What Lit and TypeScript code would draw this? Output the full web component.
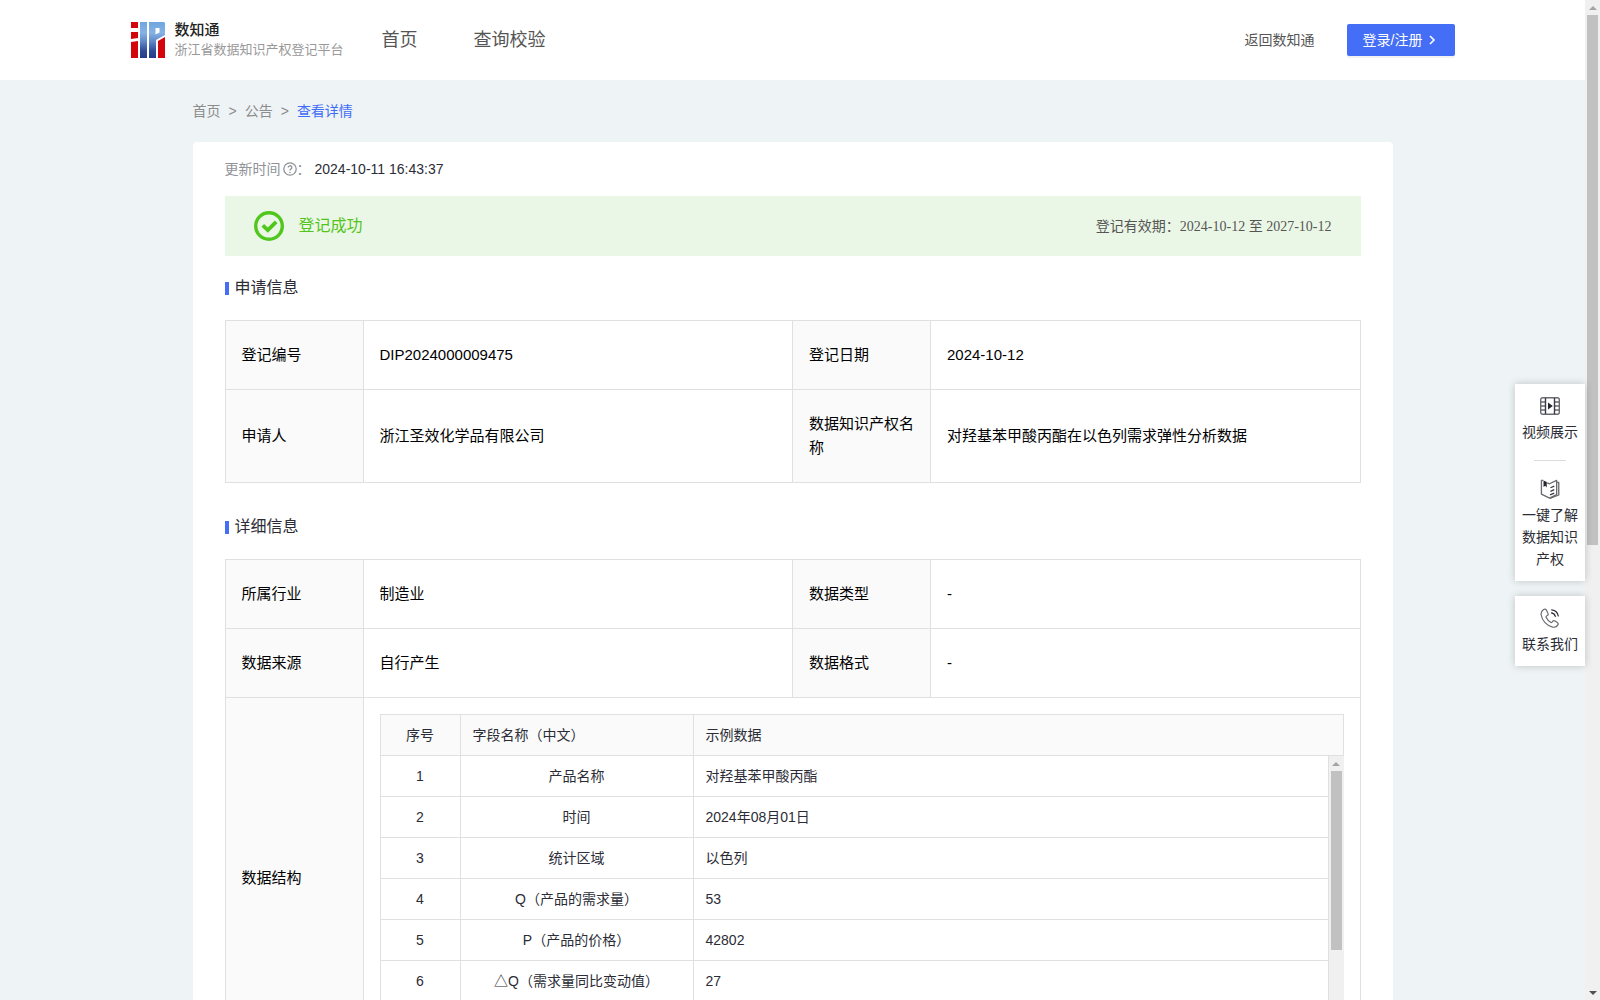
import { LitElement, html, css, svg } from "lit";
import { customElement, property } from "lit/decorators.js";

const FONT = css`"Liberation Sans", "Noto Sans CJK SC", sans-serif`;

const FIELDS: [number, string, string][] = [
  [1, "产品名称", "对羟基苯甲酸丙酯"],
  [2, "时间", "2024年08月01日"],
  [3, "统计区域", "以色列"],
  [4, "Q（产品的需求量）", "53"],
  [5, "P（产品的价格）", "42802"],
  [6, "△Q（需求量同比变动值）", "27"],
];

const logo = svg`<svg class="logo" viewBox="0 0 34 36" width="34" height="36" aria-hidden="true">
  <defs><linearGradient id="blue" gradientUnits="userSpaceOnUse" x1="0" y1="0" x2="0" y2="36">
    <stop offset="0" stop-color="#6ea6de"/><stop offset=".3" stop-color="#86b2e4"/><stop offset=".55" stop-color="#5f86c6"/><stop offset=".8" stop-color="#2f4c98"/><stop offset="1" stop-color="#243c88"/>
  </linearGradient></defs>
  <path fill="#d3040c" d="M0 0h7v6H0zM0 10h7v6l-7 1zM0 20l7-1v17H0zM27 19l7-4v21h-7z"/>
  <path fill="url(#blue)" d="M9 0h7v36H9zM18 0h15l1 1v12l-9 5v18h-7z"/>
  <path fill="#fff" d="M24.5 6h4v4.500l-4 2z"/>
</svg>`;

const helpIcon = svg`<svg viewBox="0 0 14 14" width="14" height="14" fill="none" stroke="#8f9298" aria-hidden="true">
  <circle cx="7" cy="7" r="6.2" stroke-width="1.3"/>
  <path d="M5.2 5.6a1.8 1.8 0 1 1 2.6 1.6c-.6.3-.8.5-.8 1.2" stroke-width="1.3"/><circle cx="7" cy="10.3" r=".4"/>
</svg>`;

const okIcon = svg`<svg viewBox="0 0 30 30" width="30" height="30" fill="none" stroke="#4fc71d" aria-hidden="true">
  <circle cx="15" cy="15" r="13.3" stroke-width="3.4"/><path d="M8.8 14.4l5 4.800 8.400-8.400" stroke-width="3.8"/>
</svg>`;

const videoIcon = svg`<svg viewBox="0 0 20 18" width="20" height="18" fill="none" stroke="#6a6b70" stroke-width="1.4" aria-hidden="true">
  <rect x=".7" y=".7" width="18.6" height="16.6" rx="2"/><path d="M.7 5H5M.7 9H5M.7 13H5M15 5h4.3M15 9h4.3M15 13h4.3"/>
  <path d="M5.5 1v16M14.5 1v16" stroke="#3a3b44"/>
  <path d="M8 5.6L12.8 9 8 12.4z" fill="#26272e" stroke="none"/>
</svg>`;

const bookIcon = svg`<svg viewBox="0 0 20 21" width="20" height="21" fill="none" stroke="#6a6b70" stroke-width="1.4" stroke-linejoin="round" aria-hidden="true">
  <path d="M3 1.5H1v14.3L9.5 20l7.5-3.6V1.5L9.5 5 7 4"/><path d="M17 3.5h2.2v13.3L10 20.3"/>
  <path d="M3.2 1.5v6.8l1.7-1.3 1.7 2V3.2z" fill="#26272e" stroke="none"/><path d="M10.5 9.2l4-1.8M10.5 13l4-1.8M10 16.6l4.5-1.8" stroke="#3a3b44"/>
</svg>`;

const phoneIcon = svg`<svg viewBox="0 0 20 20" width="20" height="20" fill="none" stroke="#6a6b70" stroke-width="1.2" stroke-linecap="round" stroke-linejoin="round" aria-hidden="true">
  <path d="M3.6 1.5C1.6 2.800.8 4.800 1.200 7c.8 5.400 5.600 11 11.400 12.100 2.200.4 4.200-.2 5.300-2.200.6-1.100.3-1.900-.6-2.500l-2.300-1.500c-.9-.6-1.800-.4-2.400.4l-.6.8c-.4.5-.9.5-1.400.2C8.800 13.200 7.200 11.500 6.200 9.500c-.3-.6-.2-1 .3-1.400l.9-.6c.8-.6 1-1.400.5-2.300L6.500 2.200C5.800 1 4.800.8 3.600 1.500z"/>
  <path d="M11.5 4.8c2 .3 3.400 1.600 3.800 3.600M11.700 1.800c3.400.4 6 2.800 6.600 6.200" stroke="#26272e"/>
</svg>`;

@customElement("scroll-rail")
class ScrollRail extends LitElement {
  @property({ type: Number }) thumb = 50;
  static styles = css`
    :host { display: flex; flex-direction: column; flex: none; width: 15px; background: #f0f0f0; }
    .cap { flex: none; display: flex; align-items: center; justify-content: center; height: 15px; }
    .track { flex: 1; padding: 0 2px; min-height: 0; }
    .thumb { background: #c1c1c1; }
  `;
  render() {
    return html`
      <div class="cap"><svg viewBox="0 0 8 4" width="8" height="4"><path d="M0 4l4-4 4 4z" fill="#a3a3a3"/></svg></div>
      <div class="track"><div class="thumb" style="height:${this.thumb}%"></div></div>
      <div class="cap"><svg viewBox="0 0 8 4" width="8" height="4"><path d="M0 0h8L4 4z" fill="#505050"/></svg></div>`;
  }
}

@customElement("site-header")
class SiteHeader extends LitElement {
  static styles = css`
    :host { display: block; background: #fff; font-family: ${FONT}; }
    .bar { display: flex; align-items: center; height: 80px; max-width: 1324px; margin: 0 auto; }
    a { color: #555; text-decoration: none; }
    .brand { display: flex; align-items: center; gap: 10px; }
    .logo { flex: none; }
    .names { display: flex; flex-direction: column; white-space: nowrap; }
    .name { font-size: 15px; line-height: 20px; font-weight: 500; color: #222; }
    .sub { font-size: 13px; line-height: 20px; color: #999; }
    nav { display: flex; gap: 56px; margin-left: 38px; font-size: 18px; }
    .right { display: flex; align-items: center; gap: 32px; margin-left: auto; font-size: 14px; }
    button { display: flex; align-items: center; gap: 4px; height: 32px; padding: 0 16px; border: 0; border-radius: 2px; background: #446ef5; color: #fff; font: 14px/30px ${FONT}; box-shadow: 0 2px 0 rgba(0, 0, 0, 0.05); }
  `;
  render() {
    return html`<header class="bar">
      <a class="brand" href="#">${logo}<span class="names"><span class="name">数知通</span><span class="sub">浙江省数据知识产权登记平台</span></span></a>
      <nav><a href="#">首页</a><a href="#">查询校验</a></nav>
      <div class="right"><a href="#">返回数知通</a>
        <button type="button">登录/注册<svg viewBox="0 0 12 12" width="12" height="12" fill="none" stroke="#fff" stroke-width="1.6" aria-hidden="true"><path d="M3 2l4 4-4 4"/></svg></button>
      </div>
    </header>`;
  }
}

@customElement("field-table")
class FieldTable extends LitElement {
  static styles = css`
    :host { display: block; font: 14px/22px ${FONT}; color: #2b2c36; }
    table { width: 100%; border-collapse: separate; border-spacing: 0; table-layout: fixed; }
    .frame { border: 1px solid #e0e0e0; border-bottom: 0; border-right: 0; }
    .head { border-right: 1px solid #e0e0e0; }
    .body { display: flex; height: 286px; }
    .rows { flex: 1; min-width: 0; }
    .no { width: 80px; }
    .field { width: 233px; }
    th, td { box-sizing: border-box; height: 41px; padding: 0 12px; border-right: 1px solid #e0e0e0; border-bottom: 1px solid #e0e0e0; text-align: left; font-weight: 400; }
    th { background: #fafafa; }
    .head th:last-child { border-right: 0; }
    .mid { text-align: center; }
  `;
  render() {
    return html`<div class="frame">
      <div class="head"><table>
        <colgroup><col class="no" /><col class="field" /><col /></colgroup>
        <thead><tr><th class="mid">序号</th><th>字段名称（中文）</th><th>示例数据</th></tr></thead>
      </table></div>
      <div class="body">
        <div class="rows"><table>
          <colgroup><col class="no" /><col class="field" /><col /></colgroup>
          <tbody>${FIELDS.map(([n, name, value]) => html`<tr><td class="mid">${n}</td><td class="mid">${name}</td><td>${value}</td></tr>`)}</tbody>
        </table></div>
        <scroll-rail .thumb=${70}></scroll-rail>
      </div>
    </div>`;
  }
}

@customElement("side-dock")
class SideDock extends LitElement {
  static styles = css`
    :host { display: flex; flex-direction: column; gap: 15px; width: 70px; font: 14px/22px ${FONT}; }
    .box { background: #fff; box-shadow: 0 0 8px rgba(0, 0, 0, 0.2); padding: 0 6px; }
    a { display: flex; flex-direction: column; align-items: center; gap: 5px; padding: 12px 0 11px; color: #2b2c36; text-decoration: none; text-align: center; }
    .label { width: 58px; }
    .rule { width: 32px; height: 1px; margin: 6px auto; background: #ddd; }
    svg { height: 20px; }
  `;
  render() {
    return html`
      <div class="box">
        <a href="#">${videoIcon}<span class="label">视频展示</span></a>
        <div class="rule"></div>
        <a href="#">${bookIcon}<span class="label">一键了解数据知识产权</span></a>
      </div>
      <div class="box"><a href="#">${phoneIcon}<span class="label">联系我们</span></a></div>`;
  }
}

@customElement("app-root")
class AppRoot extends LitElement {
  static styles = css`
    :host { display: flex; position: relative; height: 100vh; background: #eef3f6; font: 14px/22px ${FONT}; color: #2b2c36; }
    .page { flex: 1; min-width: 0; overflow-y: auto; scrollbar-width: none; }
    main { box-sizing: border-box; max-width: 1200px; margin: 0 auto; }
    .crumbs { display: flex; gap: 8px; padding: 20px 0; color: #8c8c8c; }
    .crumbs a { color: inherit; text-decoration: none; }
    .crumbs a.here { color: #3f6df5; }
    .card { background: #fff; border-radius: 4px; padding: 16px 32px 32px; }
    .updated { display: flex; align-items: center; }
    .updated .key { display: flex; align-items: center; color: #8f9298; }
    .updated svg { margin-left: 2px; }
    .updated .val { margin-left: 4px; }
    .banner { display: flex; align-items: center; gap: 15px; height: 60px; margin-top: 16px; padding: 0 29px; background: #ebf7e6; }
    .banner .state { font-size: 16px; color: #52c41a; }
    .banner .term { margin-left: auto; color: #555; }
    .banner .dates { font-family: "Liberation Serif", "Noto Sans CJK SC", serif; }
    h2 { display: flex; align-items: center; gap: 6px; margin: 0; padding: 19px 0; font-size: 16px; line-height: 26px; font-weight: 400; }
    h2::before { content: ""; width: 4px; height: 13px; background: #446ef5; }
    .info { width: 100%; border-collapse: collapse; table-layout: fixed; font-size: 15px; line-height: 24px; color: #000; margin-bottom: 12px; }
    .info col.key { width: 138px; }
    .info th, .info td { padding: 22px 16px; border: 1px solid #e0e0e0; text-align: left; font-weight: 400; }
    .info th { background: #fafafa; }
    .info td.nest { padding: 16px; }
    side-dock { position: absolute; right: 15px; top: 384px; }
  `;
  render() {
    const cols = html`<colgroup><col class="key" /><col /><col class="key" /><col /></colgroup>`;
    return html`
      <div class="page">
        <site-header></site-header>
        <main>
          <nav class="crumbs"><a href="#">首页</a><span>&gt;</span><a href="#">公告</a><span>&gt;</span><a class="here" href="#">查看详情</a></nav>
          <div class="card">
            <div class="updated"><span class="key">更新时间${helpIcon}：</span><span class="val">2024-10-11 16:43:37</span></div>
            <div class="banner">${okIcon}<span class="state">登记成功</span><span class="term">登记有效期：<span class="dates">2024-10-12 至 2027-10-12</span></span></div>
            <h2>申请信息</h2>
            <table class="info">${cols}<tbody>
              <tr><th>登记编号</th><td>DIP2024000009475</td><th>登记日期</th><td>2024-10-12</td></tr>
              <tr><th>申请人</th><td>浙江圣效化学品有限公司</td><th>数据知识产权名称</th><td>对羟基苯甲酸丙酯在以色列需求弹性分析数据</td></tr>
            </tbody></table>
            <h2>详细信息</h2>
            <table class="info">${cols}<tbody>
              <tr><th>所属行业</th><td>制造业</td><th>数据类型</th><td>-</td></tr>
              <tr><th>数据来源</th><td>自行产生</td><th>数据格式</th><td>-</td></tr>
              <tr><th>数据结构</th><td class="nest" colspan="3"><field-table></field-table></td></tr>
            </tbody></table>
          </div>
        </main>
      </div>
      <side-dock></side-dock>
      <scroll-rail .thumb=${54.6}></scroll-rail>`;
  }
}
